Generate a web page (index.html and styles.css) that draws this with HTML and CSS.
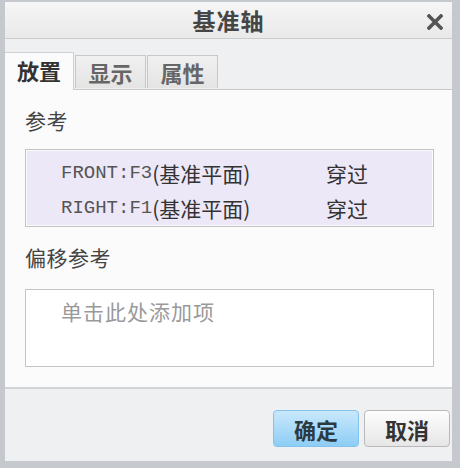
FILE: index.html
```html
<!DOCTYPE html>
<html lang="zh">
<head>
<meta charset="utf-8">
<title>基准轴</title>
<link rel="stylesheet" href="styles.css">
</head>
<body>
<div class="window">
  <div class="titlebar">
    <span class="title">基准轴</span>
    <svg class="close" width="16" height="16" viewBox="0 0 16 16"><path d="M2 2 L14 14 M14 2 L2 14" stroke="#555" stroke-width="3.6" stroke-linecap="square"/></svg>
  </div>
  <div class="tabs">
    <div class="tab active">放置</div>
    <div class="tab">显示</div>
    <div class="tab">属性</div>
  </div>
  <div class="panel">
    <div class="label">参考</div>
    <div class="reflist">
      <div class="row"><span class="name"><span class="mono">FRONT:F3</span>(基准平面)</span><span class="state">穿过</span></div>
      <div class="row"><span class="name"><span class="mono">RIGHT:F1</span>(基准平面)</span><span class="state">穿过</span></div>
    </div>
    <div class="label label2">偏移参考</div>
    <div class="offbox">
      <div class="placeholder">单击此处添加项</div>
    </div>
  </div>
  <div class="footer">
    <button class="btn primary">确定</button>
    <button class="btn">取消</button>
  </div>
</div>
</body>
</html>
```

FILE: styles.css
```css
html, body {
  margin: 0;
  padding: 0;
}
body {
  width: 460px;
  height: 468px;
  overflow: hidden;
  font-family: "Noto Sans CJK SC", "Noto Sans", sans-serif;
  background: #c5c9cd;
}
.window {
  box-sizing: border-box;
  width: 460px;
  height: 468px;
  border-style: solid;
  border-color: #c5c9cd;
  border-width: 2px 8px 7px 5px;
  display: flex;
  flex-direction: column;
  background: #eef0f1;
}
.titlebar {
  height: 36px;
  flex: none;
  border-bottom: 1px solid #c9cbcd;
  background: linear-gradient(#f6f6f6, #e9e9e9);
  display: flex;
  align-items: center;
  justify-content: center;
  position: relative;
}
.title {
  font-size: 23px;
  font-weight: bold;
  color: #454545;
  letter-spacing: 1px;
  line-height: 36px;
}
.close {
  position: absolute;
  right: 9px;
  top: 12px;
}
.tabs {
  height: 50px;
  flex: none;
  display: flex;
  align-items: flex-end;
  padding-left: 0;
  position: relative;
  z-index: 1;
}
.tab {
  box-sizing: border-box;
  height: 33px;
  width: 71px;
  margin-bottom: 1px;
  margin-right: 1px;
  border: 1px solid #c8c8c8;
  border-bottom: none;
  background: linear-gradient(#f0f0f0, #e4e4e4);
  color: #666;
  font-size: 22px;
  font-weight: bold;
  display: flex;
  align-items: center;
  justify-content: center;
  line-height: 1;
}
.tab.active {
  height: 38px;
  width: 69px;
  margin-bottom: -1px;
  background: #fbfbfc;
  color: #333;
  border-color: #d0d0d0;
  border-left: none;
  padding-bottom: 3px;
}
.panel {
  flex: 1;
  background: #fbfbfc;
  border-top: 1px solid #c8c8c8;
  border-bottom: 2px solid #d2d5d8;
  padding: 16px 18px 0 20px;
}
.label {
  font-size: 21px;
  color: #444;
  line-height: 28px;
  letter-spacing: 0.5px;
}
.label2 {
  margin-top: 16px;
}
.reflist {
  margin-top: 15px;
  height: 78px;
  box-sizing: border-box;
  border: 1px solid #c2c2c2;
  box-shadow: inset 0 0 0 1px #fbfbfd;
  background: #ede8f8;
  padding: 5px 0 0 35px;
}
.row {
  height: 35px;
  display: flex;
  align-items: center;
  font-size: 21px;
  color: #333;
}
.name {
  width: 265px;
  flex: none;
  display: flex;
  align-items: center;
}
.mono {
  font-family: "Liberation Mono", monospace;
  font-size: 19px;
  color: #555;
}
.state {
  color: #333;
}
.offbox {
  margin-top: 18px;
  height: 78px;
  box-sizing: border-box;
  border: 1px solid #c4c4c4;
  background: #fff;
  padding: 7px 0 0 35px;
}
.placeholder {
  font-size: 21px;
  color: #9a9a9a;
  letter-spacing: 1px;
  line-height: 28px;
}
.footer {
  height: 72px;
  flex: none;
  display: flex;
  justify-content: flex-end;
  align-items: flex-start;
  padding-top: 21px;
  padding-right: 2px;
  gap: 5px;
  box-sizing: border-box;
}
.btn {
  width: 86px;
  height: 37px;
  box-sizing: border-box;
  border: 1px solid #b9b9b9;
  border-radius: 4px;
  background: linear-gradient(#fdfdfd, #e6e6e6);
  font-family: "Noto Sans CJK SC", sans-serif;
  font-size: 22px;
  font-weight: bold;
  color: #333;
  padding: 0;
  line-height: 1;
}
.btn.primary {
  border-color: #86c3ec;
  background: linear-gradient(#c9e8fc, #8dcdf5);
  color: #2c3a44;
}
```
